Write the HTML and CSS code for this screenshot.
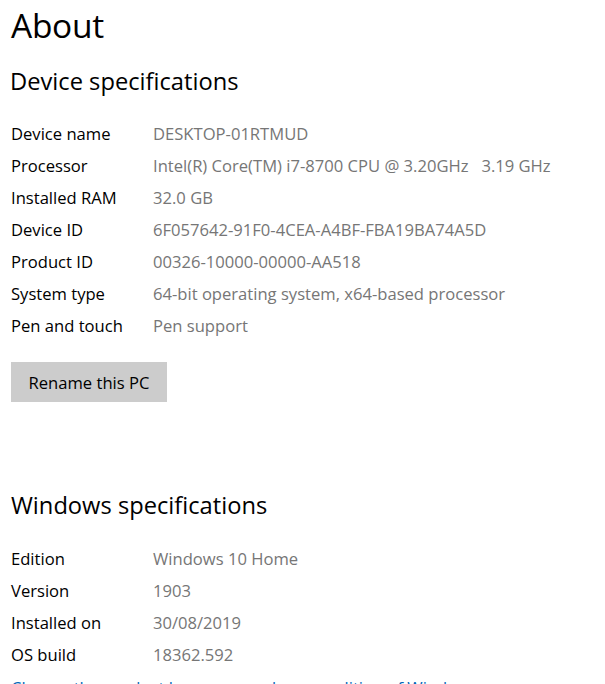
FILE: index.html
```html
<!DOCTYPE html>
<html lang="en">
<head>
<meta charset="utf-8">
<title>About</title>
<link rel="stylesheet" href="styles.css">
</head>
<body>
<main class="page">
  <h1 class="title">About</h1>
  <section class="section">
    <h2 class="heading">Device specifications</h2>
    <dl class="specs">
      <div class="row"><dt>Device name</dt><dd>DESKTOP-01RTMUD</dd></div>
      <div class="row"><dt>Processor</dt><dd>Intel(R) Core(TM) i7-8700 CPU @ 3.20GHz&nbsp;&nbsp;&nbsp;3.19 GHz</dd></div>
      <div class="row"><dt>Installed RAM</dt><dd>32.0 GB</dd></div>
      <div class="row"><dt>Device ID</dt><dd>6F057642-91F0-4CEA-A4BF-FBA19BA74A5D</dd></div>
      <div class="row"><dt>Product ID</dt><dd>00326-10000-00000-AA518</dd></div>
      <div class="row"><dt>System type</dt><dd>64-bit operating system, x64-based processor</dd></div>
      <div class="row"><dt>Pen and touch</dt><dd>Pen support</dd></div>
    </dl>
    <button class="btn" type="button">Rename this PC</button>
  </section>
  <section class="section windows">
    <h2 class="heading">Windows specifications</h2>
    <dl class="specs">
      <div class="row"><dt>Edition</dt><dd>Windows 10 Home</dd></div>
      <div class="row"><dt>Version</dt><dd>1903</dd></div>
      <div class="row"><dt>Installed on</dt><dd>30/08/2019</dd></div>
      <div class="row"><dt>OS build</dt><dd>18362.592</dd></div>
    </dl>
    <a class="link" href="#">Change the product key or upgrade your edition of Windows</a>
  </section>
</main>
</body>
</html>
```
FILE: styles.css
```css
html, body {
  margin: 0;
  padding: 0;
  background: #ffffff;
}
body {
  font-family: "Open Sans", "Noto Sans", sans-serif;
  color: #000000;
  overflow: hidden;
  height: 684px;
}
.page {
  padding: 0 0 0 11px;
}
.title {
  margin: 0;
  padding-top: 2px;
  font-size: 33.5px;
  font-weight: 400;
  line-height: 46px;
  letter-spacing: -0.3px;
}
.heading {
  margin: 0;
  font-size: 23.7px;
  font-weight: 400;
  line-height: 32px;
  margin-left: -1px;
}
.windows .heading {
  margin-left: 0;
}
.section {
  margin-top: 17px;
}
.specs {
  margin: 20px 0 0 0;
  display: flex;
  flex-direction: column;
}
.row {
  display: grid;
  grid-template-columns: 142px 1fr;
  height: 32px;
  align-items: center;
  font-size: 16.6px;
  letter-spacing: 0;
}
.row dt {
  margin: 0;
}
.row dd {
  margin: 0;
  color: #767676;
  white-space: nowrap;
}
.btn {
  margin-top: 21px;
  display: block;
  width: 156px;
  height: 40px;
  border: none;
  background: #cccccc;
  font-family: inherit;
  font-size: 16.6px;
  color: #000;
  padding: 0;
}
.windows {
  margin-top: 87px;
}
.windows .specs {
  margin-top: 21px;
}
.link {
  display: block;
  margin-top: 6px;
  color: #0067b8;
  text-decoration: none;
  font-size: 16.6px;
  white-space: nowrap;
}
```
